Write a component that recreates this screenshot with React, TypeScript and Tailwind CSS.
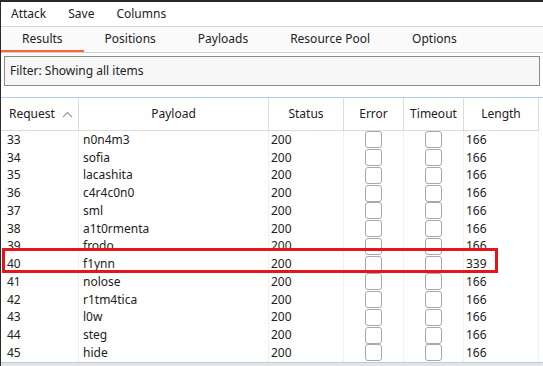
import React from 'react'

const rows: [string, string, string][] = [
  ['33', 'n0n4m3', '166'],
  ['34', 'sofia', '166'],
  ['35', 'lacashita', '166'],
  ['36', 'c4r4c0n0', '166'],
  ['37', 'sml', '166'],
  ['38', 'a1t0rmenta', '166'],
  ['39', 'frodo', '166'],
  ['40', 'f1ynn', '339'],
  ['41', 'nolose', '166'],
  ['42', 'r1tm4tica', '166'],
  ['43', 'l0w', '166'],
  ['44', 'steg', '166'],
  ['45', 'hide', '166'],
]

const tabs = ['Results', 'Positions', 'Payloads', 'Resource Pool', 'Options']

function Check() {
  return <div className="w-[17px] h-[17px] rounded-[3px] border border-[#a8a8a8] bg-white" />
}

export default function App() {
  return (
    <div
      className="w-[543px] h-[366px] overflow-hidden bg-white border-l border-t-2 border-[#2a2a2a] text-[12px] text-[#222] flex flex-col"
      style={{ fontFamily: '"Noto Sans", "Open Sans", sans-serif' }}
    >
      {/* menu bar */}
      <div className="h-[24px] flex items-center gap-[22px] px-[10px] shrink-0">
        <span>Attack</span>
        <span>Save</span>
        <span>Columns</span>
      </div>
      <div className="h-px bg-[#d6d6d6] shrink-0" />

      {/* tabs */}
      <div className="h-[25px] flex items-stretch bg-[#fafafa] shrink-0">
        {tabs.map((t, i) => (
          <div
            key={t}
            className={
              i === 0
                ? 'px-[21px] flex items-center border-b-2 border-[#ff6633]'
                : 'px-[21px] flex items-center border-b-2 border-transparent'
            }
          >
            {t}
          </div>
        ))}
      </div>
      <div className="h-px bg-[#d0d0d0] shrink-0" />

      {/* filter */}
      <div className="px-[3px] pt-[3px] shrink-0">
        <div className="h-[30px] border border-[#8a8a8a] bg-[#f7f7f7] flex items-center px-[5px]">
          Filter: Showing all items
        </div>
      </div>

      <div className="h-[11px] shrink-0" />

      {/* table */}
      <div className="relative flex-1 border-t border-[#b7cde6] flex flex-col">
        <div className="w-[538px] flex h-[33px] border-b border-[#dcdcdc] shrink-0">
          <div className="w-[78px] border-r border-[#dcdcdc] flex items-center pl-[8px] gap-[7px]">
            Request
            <svg width="11" height="7" viewBox="0 0 11 7" fill="none" stroke="#9a9a9a" strokeWidth="1.1">
              <path d="M1 6 L5.5 1.5 L10 6" />
            </svg>
          </div>
          <div className="w-[190px] border-r border-[#dcdcdc] flex items-center justify-center">Payload</div>
          <div className="w-[75px] border-r border-[#dcdcdc] flex items-center justify-center">Status</div>
          <div className="w-[60px] border-r border-[#dcdcdc] flex items-center justify-center">Error</div>
          <div className="w-[60px] border-r border-[#dcdcdc] flex items-center justify-center">Timeout</div>
          <div className="w-[75px] border-r border-[#dcdcdc] flex items-center justify-center">Length</div>
        </div>

        <div className="flex flex-col">
          {rows.map(([n, p, len]) => (
            <div key={n} className="w-[538px] flex h-[17.75px] items-center">
              <div className="w-[78px] h-full border-r border-[#f0f0f0] flex items-center pl-[6px]">{n}</div>
              <div className="w-[190px] h-full border-r border-[#f0f0f0] flex items-center pl-[4px]">{p}</div>
              <div className="w-[75px] h-full border-r border-[#f0f0f0] flex items-center pl-[2px]">200</div>
              <div className="w-[60px] h-full border-r border-[#f0f0f0] flex items-center justify-center">
                <Check />
              </div>
              <div className="w-[60px] h-full border-r border-[#f0f0f0] flex items-center justify-center">
                <Check />
              </div>
              <div className="w-[75px] h-full border-r border-[#f0f0f0] flex items-center pl-[2px]">{len}</div>
            </div>
          ))}
        </div>

        <div className="absolute left-[1px] top-[150px] w-[496px] h-[25px] border-[3px] border-[#e8141b]" />

        <div className="mt-auto h-px bg-[#b7cde6]" />
        <div className="h-[5px] bg-[#e4e4e4]" />
      </div>
    </div>
  )
}
